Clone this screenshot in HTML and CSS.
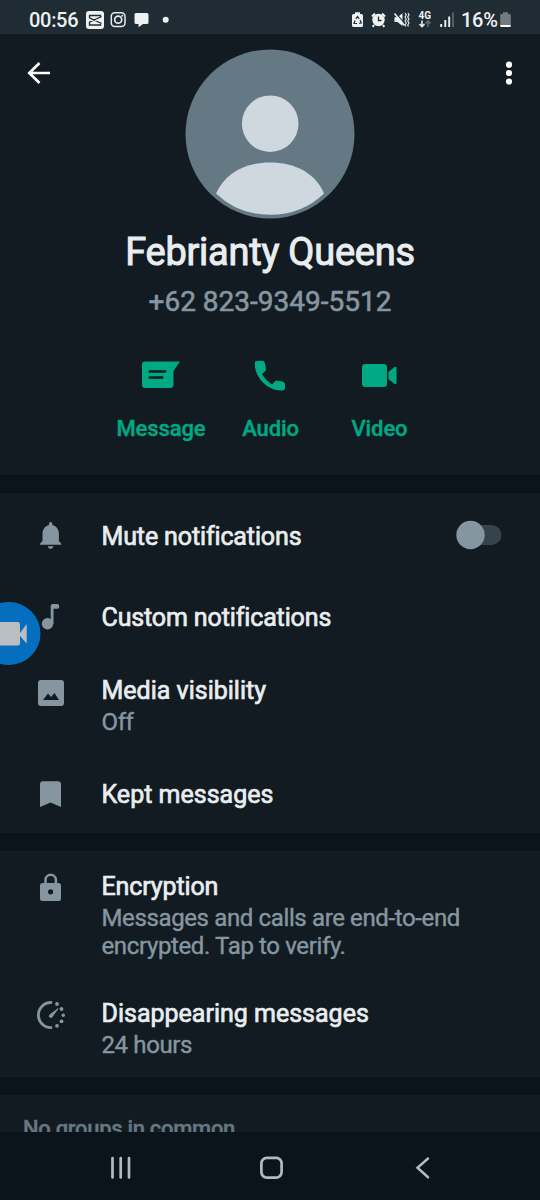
FILE: index.html
```html
<!DOCTYPE html>
<html lang="en">
<head>
<meta charset="utf-8">
<title>Contact info</title>
<link rel="stylesheet" href="styles.css">
</head>
<body>
<div class="screen">
  <header class="status">
    <span class="clock">00:56</span>
    <svg class="status-apps" width="90" height="34" viewBox="82 0 90 34">
      <rect x="86" y="11" width="18" height="18" rx="3" fill="#eef1f2"/>
      <path d="M100.500 17.800V15.500H89.500v2.300L101.500 23.500M100.500 22.200v2.800H89.500v-2.800l12-5.700" fill="none" stroke="#202c33" stroke-width="1.300"/>
      <rect x="111.300" y="12.800" width="13.700" height="13.700" rx="3.500" fill="none" stroke="#e4e8ea" stroke-width="1.500"/>
      <circle cx="118.200" cy="19.700" r="3.500" fill="none" stroke="#e4e8ea" stroke-width="1.700"/>
      <circle cx="122.300" cy="15.700" r="1" fill="#e4e8ea"/>
      <path d="M136 13h11q1.500 0 1.500 1.500v8q0 1.500-1.500 1.500h-4l-4.500 3.300V24H136q-1.500 0-1.500-1.500v-8Q134.500 13 136 13z" fill="#eef1f2"/>
      <circle cx="165.700" cy="19.700" r="3" fill="#eef1f2"/>
    </svg>
    <svg class="status-system" width="108" height="34" viewBox="350 0 108 34">
      <path d="M355 12.200h5v1.800h1.500q1.500 0 1.500 1.500v10q0 1.500-1.500 1.500h-8q-1.500 0-1.500-1.500v-10q0-1.500 1.500-1.500H355z" fill="#eef1f2"/>
      <path d="M355.800 18.800l1.700-2.300 1.700 2.300M360 20l1.400 2.800-2.200.6M357 23.500h-3l1-3" fill="none" stroke="#202c33" stroke-width="1.200"/>
      <circle cx="378.500" cy="20" r="6.200" fill="#eef1f2"/>
      <path d="M372 16.500l3-3M385 16.500l-3-3M374 25l-1.300 1.800M383 25l1.300 1.800" stroke="#eef1f2" stroke-width="2"/>
      <path d="M378.500 16.500v4h3" fill="none" stroke="#202c33" stroke-width="1.300"/>
      <path d="M394.500 17.300h3l5-4V26l-5-4h-3z" fill="#eef1f2"/>
      <path d="M395.500 12.800l9.500 11" stroke="#202c33" stroke-width="1.200"/>
      <path d="M394.500 13.500l10 12" stroke="#eef1f2" stroke-width="1.500"/>
      <path d="M405 13l1.300 2-1.300 2 1.300 2-1.300 2 1.300 2-1.300 2 1 1.500M408 13l1 2-1.300 2 1.300 2-1.300 2 1.300 2-1.300 2 .8 1.500" fill="none" stroke="#e4e8ea" stroke-width="1.200"/>
      <text x="418.500" y="19" class="network">4G</text>
      <path d="M422 20.500v6M419.500 24l2.500 2.700 2.500-2.700" fill="none" stroke="#eef1f2" stroke-width="1.500"/>
      <path d="M428 27v-6M425.500 23.500l2.500-2.500 2.500 2.500" fill="none" stroke="#66727a" stroke-width="1.400"/>
      <path d="M441.200 24v3M445.300 20v7M449.200 16.500V27" stroke="#eef1f2" stroke-width="1.900"/>
      <path d="M453 12.500V27" stroke="#5c686f" stroke-width="1.700"/>
    </svg>
    <span class="percent">16%</span>
    <svg width="16" height="34" viewBox="499 0 16 34">
      <path d="M503 12.300h5v1.700h1.500q1.300 0 1.300 1.300v10.200h-10.600V15.300q0-1.300 1.300-1.300h1.500z" fill="#747b7f"/>
      <path d="M500.200 25h10.600v.8q0 1.200-1.200 1.200h-8.200q-1.200 0-1.200-1.200z" fill="#fff"/>
    </svg>
  </header>

  <section class="profile">
    <div class="topbar">
      <svg width="56" height="60" viewBox="0 44 56 60"><path d="M50 73H29.500M39.500 63l-10.200 10 10.200 10" fill="none" stroke="#fff" stroke-width="2.700"/></svg>
      <svg class="avatar" width="170" height="170" viewBox="185 49 170 170">
        <circle cx="270" cy="134" r="84.500" fill="#647984"/>
        <circle cx="270.200" cy="123.700" r="28.300" fill="#cfd8df"/>
        <path d="M216 193.500C225 173 245 162.500 270 162.500S315.500 173 324 193.500Q302 214.800 270 214.800T216 193.500z" fill="#cfd8df"/>
      </svg>
      <svg width="56" height="60" viewBox="484 44 56 60" fill="#fff"><circle cx="509" cy="64.700" r="3.100"/><circle cx="509" cy="73" r="3.100"/><circle cx="509" cy="81.500" r="3.100"/></svg>
    </div>
    <h1 class="name">Febrianty Queens</h1>
    <div class="phone">+62 823-9349-5512</div>
    <nav class="actions">
      <div class="action">
        <svg width="50" height="44" viewBox="136 354 50 44"><path d="M145 361.500h35L173.500 371v14q0 3-3 3H145q-3 0-3-3v-20.500q0-3 3-3z" fill="#00a884"/><path d="M148.700 371.500h17.500M148.700 377.500h14.500" stroke="#111b21" stroke-width="2.400"/></svg>
        <span>Message</span>
      </div>
      <div class="action">
        <svg width="50" height="44" viewBox="246 354 50 44"><path d="M257.500 360.800h5q2 0 2.500 2.500l1 5.500q.2 1.700-1 2.800l-3 2.500c2.500 4.500 6 8 10 10.300l2.700-2.900q1.300-1.200 3-.8l5 .9q2.300.5 2.300 2.600v3.500q0 2.800-3 2.800C268 391 254.700 378 254.700 363.500q0-2.700 2.800-2.700z" fill="#00a884"/></svg>
        <span>Audio</span>
      </div>
      <div class="action">
        <svg width="50" height="44" viewBox="355 354 50 44" fill="#00a884"><rect x="362" y="364" width="25" height="23" rx="3.300"/><path d="M388.500 372l6-5q2-1 2 1v15q0 2-2 1l-6-5z"/></svg>
        <span>Video</span>
      </div>
    </nav>
  </section>

  <section class="group">
    <div class="row mute">
      <svg width="102" height="81" viewBox="0 493 102 81" fill="#8696a0"><path d="M50.700 522q1.700 0 1.700 1.700v1.200c4 1 6.500 4.500 6.500 8.800V541l2.400 2.700v1.100H40v-1.100l2.500-2.700v-7.300c0-4.300 2.500-7.800 6.500-8.800v-1.200q0-1.700 1.700-1.700z"/><path d="M47.700 546.300h5.800q-.6 2.800-2.900 2.800t-2.900-2.800z"/></svg>
      <div class="text"><div class="title tight">Mute notifications</div></div>
      <svg class="switch" width="60" height="81" viewBox="446 493 60 81"><rect x="462" y="525" width="39.500" height="20" rx="10" fill="#36434b"/><circle cx="470.500" cy="535" r="14.200" fill="#8696a0"/></svg>
    </div>
    <div class="row custom">
      <svg width="102" height="81" viewBox="0 574 102 81"><circle cx="47.500" cy="623.700" r="5.700" fill="#8696a0"/><path d="M50.700 624V606q0-2 2-2h4.500q2 0 2 2v.7q0 2-2 2H53.500V624z" fill="#8696a0"/></svg>
      <div class="text"><div class="title tight">Custom notifications</div></div>
    </div>
    <div class="row media">
      <svg width="102" height="102" viewBox="0 655 102 102"><rect x="38" y="680" width="26" height="26" rx="3" fill="#8696a0"/><path d="M43 700l5-6.500 3 3.500 3.500-4 4.500 7z" fill="#111b21"/></svg>
      <div class="text"><div class="title">Media visibility</div><div class="sub">Off</div></div>
    </div>
    <div class="row kept">
      <svg width="102" height="76" viewBox="0 757 102 76"><path d="M43 781.300h15q3 0 3 3v22.600l-10.500-4.500-10.500 4.500v-22.600q0-3 3-3z" fill="#8696a0"/></svg>
      <div class="text"><div class="title">Kept messages</div></div>
    </div>
  </section>

  <section class="group">
    <div class="row encryption">
      <svg width="102" height="126" viewBox="0 851 102 126"><path d="M45.500 884v-4a5.200 5.200 0 0 1 10.400 0v4" fill="none" stroke="#8696a0" stroke-width="2.500"/><rect x="40" y="883" width="21" height="18" rx="2.500" fill="#8696a0"/><circle cx="50.600" cy="891.800" r="2.600" fill="#111b21"/></svg>
      <div class="text"><div class="title tight">Encryption</div><div class="sub">Messages and calls are end-to-end<br>encrypted. Tap to verify.</div></div>
    </div>
    <div class="row disappearing">
      <svg width="102" height="100" viewBox="0 977 102 100"><path d="M51 1002.500a12.600 12.600 0 0 0 0 25.200" fill="none" stroke="#8696a0" stroke-width="2.800" stroke-linecap="round"/><path d="M58 1008.700l-6.200 8.500q-2 .7-2.700-1l1.500-2z" fill="#8696a0" stroke="#8696a0" stroke-linejoin="round"/><g fill="#8696a0"><circle cx="57" cy="1004" r="1.900"/><circle cx="61.500" cy="1009" r="1.900"/><circle cx="63.300" cy="1015.200" r="1.700"/><circle cx="61.500" cy="1021.300" r="1.900"/><circle cx="57" cy="1025.800" r="1.900"/></g></svg>
      <div class="text"><div class="title">Disappearing messages</div><div class="sub">24 hours</div></div>
    </div>
  </section>

  <section class="groups"><span>No groups in common</span></section>

  <footer class="nav">
    <svg width="540" height="68" viewBox="0 1132 540 68" fill="none" stroke="#b3bac0">
      <path d="M112.500 1158v19.500M120.700 1158v19.500M129 1158v19.500" stroke-width="2.700" stroke-linecap="round"/>
      <rect x="261.400" y="1157.900" width="20.200" height="19.700" rx="5.500" stroke-width="2.700"/>
      <path d="M428 1158.500l-10.500 9.300 10.500 9.500" stroke-width="2.500" stroke-linecap="round"/>
    </svg>
  </footer>

  <svg class="recorder" width="42" height="66" viewBox="0 600 42 66"><circle cx="9" cy="633.500" r="31.500" fill="#056ebf"/><path d="M0 622h17.500q2.500 0 2.500 2.500v18.500q0 2.500-2.500 2.500H0zM20 633l6.700-9v19.500L20 636z" fill="#b9bec3"/></svg>
</div>
</body>
</html>
```
FILE: styles.css
```css
body {
  margin: 0;
  background: #0b141a;
  font-family: Roboto, "Liberation Sans", sans-serif;
}

svg {
  display: block;
  flex: none;
}

.screen {
  position: relative;
  display: flex;
  flex-direction: column;
  width: 540px;
  height: 1200px;
  overflow: hidden;
  white-space: nowrap;
}

.status {
  display: flex;
  height: 34px;
  flex: none;
  padding-left: 29px;
  background: #202c33;
  color: #eef1f2;
  font-size: 20px;
  font-weight: 500;
  line-height: 40px;
}

.clock {
  width: 53px;
  letter-spacing: -0.300px;
}

.status-system {
  margin-left: 178px;
}

.percent {
  width: 38px;
  margin-left: 3px;
  letter-spacing: -0.300px;
}

.network {
  fill: #eef1f2;
  font-size: 10px;
  font-weight: 700;
  letter-spacing: 0;
}

.profile {
  height: 441px;
  flex: none;
  background: #111b21;
  text-align: center;
}

.topbar {
  display: flex;
  justify-content: space-between;
  height: 180px;
  padding-top: 10px;
  box-sizing: border-box;
}

.avatar {
  margin-top: 5px;
}

.name {
  margin: 14px 0 0;
  color: #e9edef;
  font-size: 38px;
  font-weight: 400;
  letter-spacing: -0.250px;
  line-height: 48px;
  -webkit-text-stroke: 1px #e9edef;
}

.phone {
  margin-top: 8px;
  color: #8696a0;
  font-size: 28px;
  line-height: 36px;
  -webkit-text-stroke: 0.600px #8696a0;
}

.actions {
  display: grid;
  grid-template-columns: 110px 109px 109px;
  margin: 34px 0 0 106px;
  color: #00a884;
  font-size: 22px;
  font-weight: 500;
  letter-spacing: -0.100px;
  line-height: 28px;
  -webkit-text-stroke: 0.400px #00a884;
}

.action {
  display: flex;
  flex-direction: column;
  align-items: center;
  gap: 17px;
}

.group {
  margin-top: 18px;
  flex: none;
  background: #111b21;
}

.row {
  display: flex;
  box-sizing: border-box;
}

.text {
  flex: 1;
  margin-left: -0.500px;
}

.mute,
.custom {
  height: 81px;
}

.mute .text,
.custom .text {
  padding-top: 29px;
}

.switch {
  margin-right: 34px;
}

.media {
  height: 102px;
}

.media .text {
  padding-top: 21px;
}

.kept {
  height: 76px;
}

.kept .text {
  padding-top: 23px;
}

.encryption {
  height: 126px;
}

.encryption .text {
  padding-top: 21px;
}

.disappearing {
  height: 100px;
}

.disappearing .text {
  padding-top: 22px;
}

.title {
  color: #e9edef;
  font-size: 25px;
  line-height: 30px;
  -webkit-text-stroke: 0.700px #e9edef;
}

.tight {
  letter-spacing: -0.130px;
}

.sub {
  margin-top: 2px;
  color: #8696a0;
  font-size: 24px;
  letter-spacing: -0.370px;
  line-height: 28px;
  -webkit-text-stroke: 0.400px #8696a0;
}

.groups {
  height: 37px;
  margin-top: 18px;
  flex: none;
  padding: 20px 0 0 23px;
  box-sizing: border-box;
  overflow: hidden;
  background: #111b21;
  color: #667781;
  font-size: 22px;
  font-weight: 500;
  letter-spacing: -0.300px;
  line-height: 28px;
  -webkit-text-stroke: 0.400px #667781;
}

.nav {
  flex: none;
}

.recorder {
  position: absolute;
  left: 0;
  top: 600px;
}
```
